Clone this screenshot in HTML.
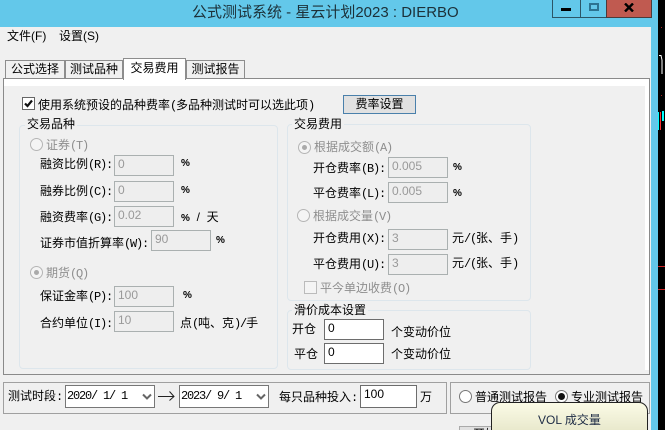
<!DOCTYPE html>
<html><head><meta charset="utf-8">
<style>
html,body{margin:0;padding:0;background:#000}
#w{position:relative;width:665px;height:430px;overflow:hidden;background:#000;font-family:"Liberation Sans","WenQuanYi Zen Hei","Noto Sans CJK SC",sans-serif;font-size:12px;color:#000}
#w div{position:absolute;box-sizing:border-box}
.a{font-family:"Liberation Mono",monospace;font-size:12px;letter-spacing:-1.2px}
.t{white-space:nowrap;line-height:14px;height:14px}
.g{color:#8e8e8e}
.i{background:#eee;border:1px solid #aab0b0;height:21px;width:60px;color:#999;padding:1px 0 0 3px;line-height:14px;font-size:12px}
.e{background:#fff;border:1px solid #6d6d6d;height:21px;width:60px;color:#000;padding:1px 0 0 3px;line-height:14px;font-size:12px}
.gb{border:1px solid #dde6ec;border-radius:4px}
.l{background:#f0f0f0;padding:0 2px;line-height:14px;height:14px;white-space:nowrap}
.r{width:13px;height:13px;border-radius:50%;border:1px solid #b5b5b5;background:#f4f4f4}
.tab{border:1px solid #8d8d8d;border-bottom:none;background:#f0f0f0;text-align:center;line-height:17px;white-space:nowrap}
.sel{background:#fff;border:1px solid #777;width:90px;height:23px;line-height:21px;padding-left:1px;white-space:nowrap;font-family:"Liberation Mono",monospace;font-size:12px;letter-spacing:-1.2px}
</style></head>
<body><div id="w">
<div style="left:0;top:0;width:658px;height:430px;background:#63c8ea"></div>
<div style="left:0;top:27px;width:651px;height:403px;background:#f0f0f0"></div>
<div class="t" style="left:192px;top:3px;font-size:15px;line-height:19px;height:19px;color:#1c3038">公式测试系统 - 星云计划2023 : DIERBO</div>

<div style="left:552px;top:0;width:100px;height:18px;border:1px solid #2c5566;border-top:none;background:#63c8ea"></div>
<div style="left:580px;top:0;width:1px;height:17px;background:#2c5566"></div>
<div style="left:606px;top:0;width:46px;height:18px;background:#c05a50;border:1px solid #4c3b3b;border-top:none"></div>
<div style="left:561px;top:8px;width:10px;height:3px;background:#000"></div>
<div style="left:589px;top:3px;width:10px;height:8px;border:2px solid #2c7391"></div>
<svg style="position:absolute;left:624px;top:3px" width="10" height="9" viewBox="0 0 10 9"><path d="M1 0.5L9 8.5M9 0.5L1 8.5" stroke="#000" stroke-width="2.4" fill="none"/></svg>

<div class="t" style="left:7px;top:29px">文件(F)</div>
<div class="t" style="left:59px;top:29px">设置(S)</div>

<div class="tab" style="left:5px;top:60px;width:60px;height:19px">公式选择</div>
<div class="tab" style="left:65px;top:60px;width:58px;height:19px">测试品种</div>
<div class="tab" style="left:186px;top:60px;width:59px;height:19px">测试报告</div>

<div style="left:3px;top:78px;width:647px;height:297px;border:1px solid #8a8a8a;background:#fff"></div>
<div style="left:7px;top:86px;width:638px;height:284px;background:#f0f0f0"></div>
<div style="left:4px;top:370px;width:645px;height:4px;background:#f0f0f0"></div>
<div style="left:4px;top:86px;width:3px;height:288px;background:#f0f0f0"></div>
<div class="tab" style="left:123px;top:58px;width:63px;height:22px;background:#fff;border-color:#8d8d8d;border-bottom:none;line-height:18px">交易费用</div>

<div style="left:22px;top:97px;width:13px;height:13px;border:1px solid #666;background:#fff"></div>
<svg style="position:absolute;left:23px;top:98px" width="11" height="11" viewBox="0 0 11 11"><path d="M2 5.5L4.5 8L9 2.5" stroke="#111" stroke-width="2.2" fill="none"/></svg>
<div class="t" style="left:38px;top:98px">使用系统预设的品种费率<span class="a">(</span>多品种测试时可以选此项<span class="a">)</span></div>
<div style="left:343px;top:95px;width:73px;height:19px;background:#e1e1e1;border:1px solid #4a80ab;text-align:center;line-height:17px">费率设置</div>

<div class="gb" style="left:19px;top:125px;width:259px;height:244px"></div>
<div class="l" style="left:25px;top:117px">交易品种</div>
<div class="r" style="left:30px;top:138px"></div>
<div class="t g" style="left:46px;top:138px">证券<span class="a">(T)</span></div>
<div class="t" style="left:40px;top:157px">融资比例<span class="a">(R):</span></div><div class="i" style="left:114px;top:155px">0</div><div class="t" style="left:181px;top:157px;font-weight:bold;font-size:10px">%</div>
<div class="t" style="left:40px;top:184px">融券比例<span class="a">(C):</span></div><div class="i" style="left:114px;top:181px">0</div><div class="t" style="left:181px;top:184px;font-weight:bold;font-size:10px">%</div>
<div class="t" style="left:40px;top:210px">融资费率<span class="a">(G):</span></div><div class="i" style="left:114px;top:206px">0.02</div><div class="t" style="left:181px;top:210px"><b style="font-size:10px">%</b> &nbsp;/ &nbsp;天</div>
<div class="t" style="left:40px;top:236px">证券市值折算率<span class="a">(W):</span></div><div class="i" style="left:151px;top:230px">90</div><div class="t" style="left:216px;top:234px;font-weight:bold;font-size:10px">%</div>
<div class="r" style="left:30px;top:266px"></div><div style="left:34px;top:270px;width:5px;height:5px;border-radius:50%;background:#aaa"></div>
<div class="t g" style="left:46px;top:266px">期货<span class="a">(Q)</span></div>
<div class="t" style="left:40px;top:289px">保证金率<span class="a">(P):</span></div><div class="i" style="left:114px;top:286px">100</div><div class="t" style="left:183px;top:289px;font-weight:bold;font-size:10px">%</div>
<div class="t" style="left:40px;top:316px">合约单位<span class="a">(I):</span></div><div class="i" style="left:114px;top:311px">10</div><div class="t" style="left:180px;top:316px">点<span class="a">(</span>吨、克<span class="a">)/</span>手</div>

<div class="gb" style="left:287px;top:124px;width:244px;height:177px"></div>
<div class="l" style="left:292px;top:117px">交易费用</div>
<div class="r" style="left:298px;top:141px"></div><div style="left:302px;top:145px;width:5px;height:5px;border-radius:50%;background:#aaa"></div>
<div class="t g" style="left:314px;top:140px">根据成交额<span class="a">(A)</span></div>
<div class="t" style="left:313px;top:161px">开仓费率<span class="a">(B):</span></div><div class="i" style="left:388px;top:157px">0.005</div><div class="t" style="left:453px;top:161px;font-weight:bold;font-size:10px">%</div>
<div class="t" style="left:313px;top:186px">平仓费率<span class="a">(L):</span></div><div class="i" style="left:388px;top:182px">0.005</div><div class="t" style="left:453px;top:187px;font-weight:bold;font-size:10px">%</div>
<div class="r" style="left:297px;top:209px"></div>
<div class="t g" style="left:313px;top:209px">根据成交量<span class="a">(V)</span></div>
<div class="t" style="left:313px;top:231px">开仓费用<span class="a">(X):</span></div><div class="i" style="left:388px;top:229px">3</div><div class="t" style="left:452px;top:231px">元<span class="a">/(</span>张、手<span class="a">)</span></div>
<div class="t" style="left:313px;top:257px">平仓费用<span class="a">(U):</span></div><div class="i" style="left:388px;top:254px">3</div><div class="t" style="left:452px;top:256px">元<span class="a">/(</span>张、手<span class="a">)</span></div>
<div style="left:304px;top:281px;width:13px;height:13px;border:1px solid #bbb;background:#f4f4f4"></div>
<div class="t g" style="left:320px;top:281px">平今单边收费<span class="a">(O)</span></div>

<div class="gb" style="left:287px;top:310px;width:244px;height:60px"></div>
<div class="l" style="left:292px;top:303px">滑价成本设置</div>
<div class="t" style="left:292px;top:322px">开仓</div><div class="e" style="left:324px;top:319px">0</div><div class="t" style="left:391px;top:325px">个变动价位</div>
<div class="t" style="left:294px;top:347px">平仓</div><div class="e" style="left:324px;top:343px">0</div><div class="t" style="left:391px;top:347px">个变动价位</div>

<div style="left:3px;top:382px;width:444px;height:32px;border:1px solid #a0a0a0"></div>
<div class="t" style="left:8px;top:389px">测试时段<span class="a">:</span></div>
<div class="sel" style="left:65px;top:385px">2020/ 1/ 1</div>
<svg style="position:absolute;left:142px;top:393px" width="10" height="8" viewBox="0 0 10 8"><path d="M1 1.5L5 5.5L9 1.5" stroke="#666" stroke-width="2" fill="none"/></svg>
<svg style="position:absolute;left:157px;top:390px" width="19" height="12" viewBox="0 0 19 12"><path d="M1 6.5H17M12.5 1.5L17 6.5L12.5 10.5" stroke="#222" stroke-width="1" fill="none"/></svg>
<div class="sel" style="left:179px;top:385px">2023/ 9/ 1</div>
<svg style="position:absolute;left:256px;top:393px" width="10" height="8" viewBox="0 0 10 8"><path d="M1 1.5L5 5.5L9 1.5" stroke="#666" stroke-width="2" fill="none"/></svg>
<div class="t" style="left:279px;top:390px">每只品种投入<span class="a">:</span></div>
<div class="e" style="left:360px;top:385px;width:57px;height:23px">100</div>
<div class="t" style="left:420px;top:390px">万</div>

<div style="left:450px;top:382px;width:200px;height:32px;border:1px solid #a0a0a0"></div>
<div class="r" style="left:459px;top:390px;background:#fff;border:1px solid #777"></div>
<div class="t" style="left:475px;top:390px">普通测试报告</div>
<div class="r" style="left:555px;top:390px;background:#fff;border:1px solid #777"></div><div style="left:558px;top:393px;width:7px;height:7px;border-radius:50%;background:#111"></div>
<div class="t" style="left:571px;top:390px">专业测试报告</div>

<div style="left:459px;top:426px;width:72px;height:6px;background:#e1e1e1;border:1px solid #aaa"></div>
<div class="t" style="left:473px;top:427px">开始</div>
<div style="left:556px;top:426px;width:75px;height:6px;background:#e1e1e1;border:1px solid #aaa"></div>

<div style="left:491px;top:402px;width:157px;height:30px;border:1px solid #222;border-radius:9px 9px 0 0;background:linear-gradient(#fbfbe6,#e8e8cc)"></div>
<div class="t" style="left:538px;top:413px;color:#1d2b44">VOL 成交量</div>

<svg style="position:absolute;left:658px;top:0" width="7" height="430" viewBox="0 0 7 430">
<path d="M1 55.5H3L4 60V74" stroke="#fff" fill="none"/>
<rect x="0" y="112" width="1" height="18" fill="#0ff"/><rect x="2" y="112" width="1" height="18" fill="#f33"/><rect x="4" y="111" width="2" height="10" fill="#0ff"/>
<rect x="0" y="266" width="7" height="1" fill="#c22"/><rect x="0" y="289" width="7" height="1" fill="#c22"/>
<rect x="3" y="27" width="1" height="1" fill="#a22"/><rect x="3" y="95" width="1" height="1" fill="#a22"/>
</svg>
</div></body></html>
